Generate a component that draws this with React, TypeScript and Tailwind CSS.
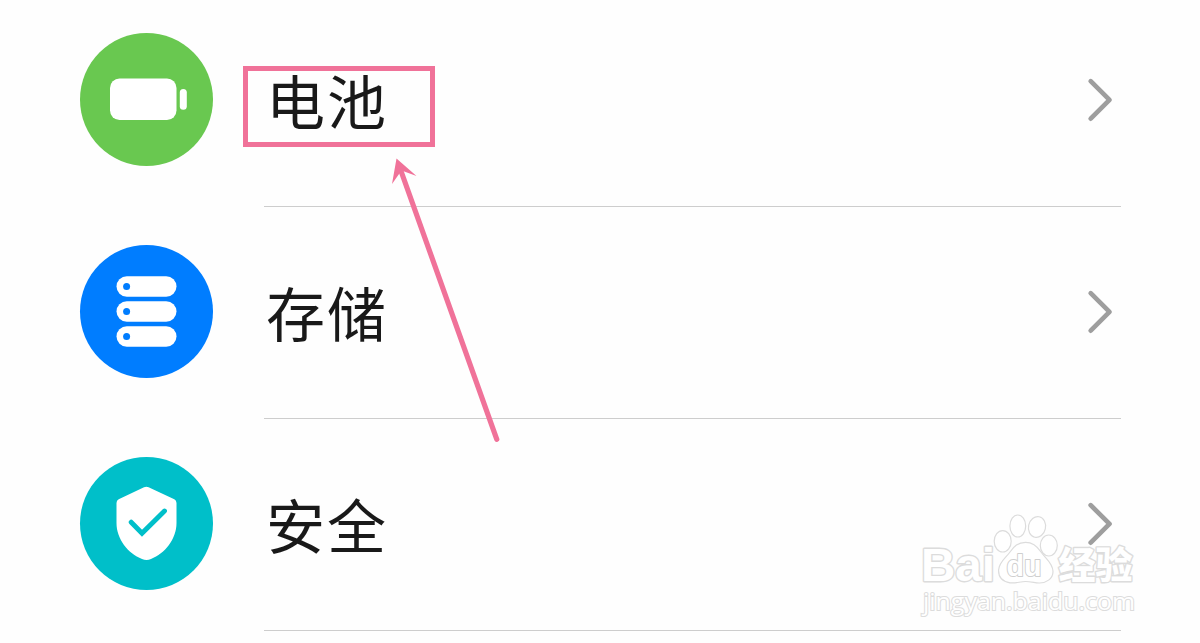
import type { ReactNode } from 'react';

type SettingItem = {
    label: string;
    color: string;
    icon: ReactNode;
};

function BatteryIcon() {
    return (
        <svg viewBox="0 0 133 133" className="size-full" fill="#fff">
            <rect x="30" y="45.5" width="66.5" height="41.5" rx="9.5" />
            <rect x="99.8" y="56" width="7" height="20.8" rx="3.5" />
        </svg>
    );
}

function StorageIcon() {
    return (
        <svg viewBox="0 0 133 133" className="size-full">
            {[31.2, 56.2, 81.2].map((y) => (
                <g key={y}>
                    <rect x="36.5" y={y} width="60" height="20.6" rx="10.3" fill="#fff" />
                    <circle cx="46.6" cy={y + 10.3} r="3.5" fill="#007dff" />
                </g>
            ))}
        </svg>
    );
}

function ShieldIcon() {
    return (
        <svg viewBox="0 0 133 133" className="size-full">
            <path
                d="M64 30.3Q66.3 29.3 68.6 30.3L94.3 42.3Q96.5 43.5 96.5 46V66C96.5 82 85 96.5 71 102Q66.5 104 62 102C48 96.5 36.5 82 36.5 66V46Q36.5 43.5 38.7 42.3Z"
                fill="#fff"
            />
            <path d="M51.2 65.2L62 76.2L84.5 54" fill="none" stroke="#00bfc9" strokeWidth="4.9" strokeLinecap="round" />
        </svg>
    );
}

const items: SettingItem[] = [
    { label: '电池', color: 'bg-[#69c850]', icon: <BatteryIcon /> },
    { label: '存储', color: 'bg-[#007dff]', icon: <StorageIcon /> },
    { label: '安全', color: 'bg-[#00bfc9]', icon: <ShieldIcon /> },
];

function SettingRow({ label, color, icon }: SettingItem) {
    return (
        <li className="flex h-[212px]">
            <div className="flex w-[264px] shrink-0 items-center pb-[3px] pl-20">
                <div className={`size-[133px] rounded-full ${color}`}>{icon}</div>
            </div>
            <div className="flex w-[857px] items-center justify-between border-b border-[#cdcdcd] pr-2 pb-[2px] pl-[2px]">
                <span className="pt-px text-[59px] leading-[80px] tracking-[2px] text-[#191919]">{label}</span>
                <svg className="h-12 w-7" viewBox="0 0 28 48" fill="none" stroke="#9e9e9e" strokeWidth="4.7" strokeLinecap="round" strokeLinejoin="round">
                    <path d="M5.7 5.2L24.5 23.9L5.7 42.7" />
                </svg>
            </div>
        </li>
    );
}

function Arrow() {
    return (
        <svg className="absolute top-[150px] left-[380px]" width="130" height="300" viewBox="380 150 130 300">
            <path d="M401 171L496.8 439.3" stroke="#f07299" strokeWidth="5.2" strokeLinecap="round" />
            <path d="M396.5 158.5L416.5 176L401.5 170.5L392 184Z" fill="#f07299" />
        </svg>
    );
}

function Watermark() {
    return (
        <svg className="absolute top-[505px] left-[915px]" width="230" height="120" viewBox="915 505 230 120" fill="#fff" stroke="#dcdcdc" strokeWidth="1.2">
            <ellipse cx="1002.7" cy="541.3" rx="8.5" ry="10.7" />
            <ellipse cx="1017.8" cy="526" rx="7.9" ry="11" />
            <ellipse cx="1037" cy="527" rx="8.5" ry="10.5" transform="rotate(12 1037 527)" />
            <ellipse cx="1048.8" cy="545.5" rx="8.5" ry="10.5" />
            <path d="M1025.5 542.3C1033 542.3 1037.5 546.5 1041 552C1045 558 1053 563 1053 571.5C1053 579 1046 583.2 1039 583C1034 582.5 1030 581.5 1025.5 581.5C1020 581.5 1016 583.5 1010 582.8C1002 581.5 998.3 577 998.6 570C999 562 1006 557.5 1010 552C1014 546.5 1018 542.3 1025.5 542.3Z" />
            <g className="font-['Liberation_Sans','Noto_Sans_CJK_SC',sans-serif] font-bold" paintOrder="stroke" strokeWidth="2.8" strokeLinejoin="round">
                <text x="921" y="581" fontSize="47" textLength="74" lengthAdjust="spacingAndGlyphs">Bai</text>
                <text x="1006.5" y="576" fontSize="30" stroke="#cfcfcf" strokeWidth="2" textLength="35" lengthAdjust="spacingAndGlyphs">du</text>
                <text x="1058.5" y="578.5" fontSize="37" className="font-black" textLength="74" lengthAdjust="spacingAndGlyphs">经验</text>
            </g>
            <text x="923" y="609.5" fontSize="24" className="font-['Open_Sans',sans-serif]" paintOrder="stroke" strokeWidth="2" textLength="212" lengthAdjust="spacingAndGlyphs">
                jingyan.baidu.com
            </text>
        </svg>
    );
}

export default function App() {
    return (
        <main className="relative h-[643px] w-[1200px] overflow-hidden bg-[#fefefe] font-['Noto_Sans_CJK_SC',sans-serif]">
            <ul className="-mt-[5px]">
                {items.map((item) => (
                    <SettingRow key={item.label} {...item} />
                ))}
            </ul>
            <div className="absolute top-[66px] left-[243px] h-[81px] w-48 border-5 border-[#f07299]" />
            <Arrow />
            <Watermark />
        </main>
    );
}
